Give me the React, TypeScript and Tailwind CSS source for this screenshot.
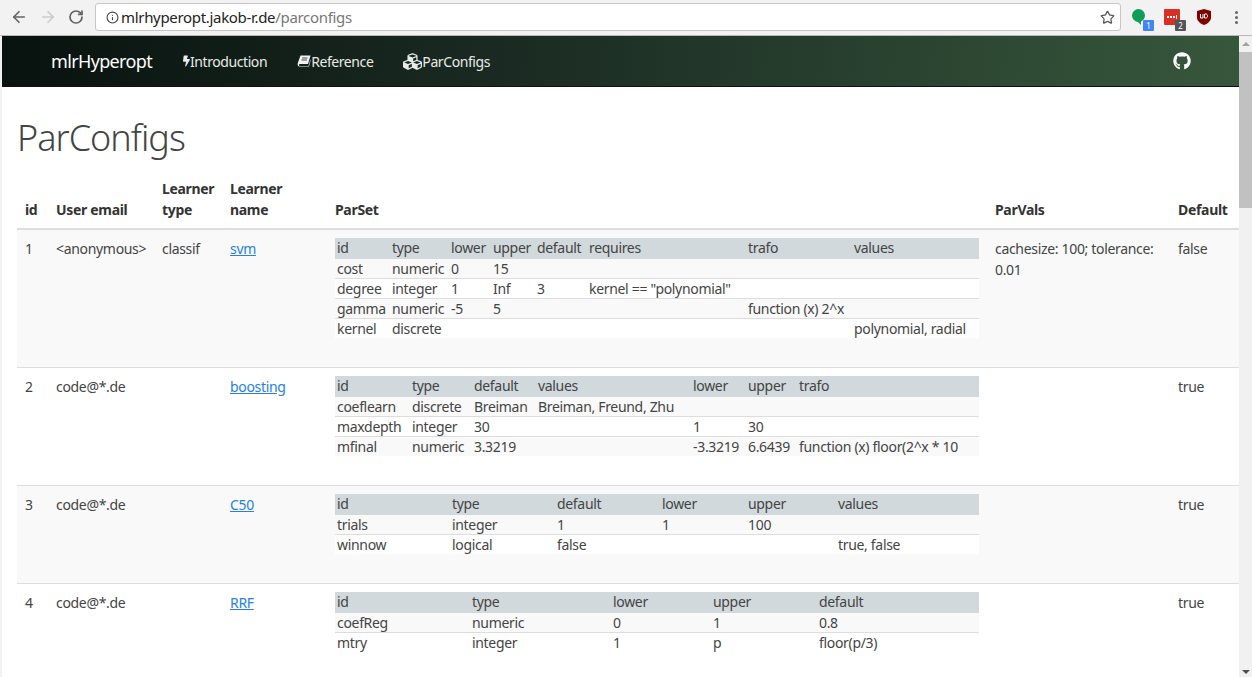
import React from "react";
import { FaBolt, FaCubes, FaGithub } from "react-icons/fa";
import { ArrowLeft, ArrowRight, RotateCw, Info, Star } from "lucide-react";

type Sub = { cols: number[]; rows: string[][] };

const subs: Sub[] = [
  {
    cols: [55, 59, 42, 44, 52, 159, 106, 127],
    rows: [
      ["id", "type", "lower", "upper", "default", "requires", "trafo", "values"],
      ["cost", "numeric", "0", "15", "", "", "", ""],
      ["degree", "integer", "1", "Inf", "3", 'kernel == "polynomial"', "", ""],
      ["gamma", "numeric", "-5", "5", "", "", "function (x) 2^x", ""],
      ["kernel", "discrete", "", "", "", "", "", "polynomial, radial"],
    ],
  },
  {
    cols: [75, 62, 64, 155, 55, 51, 182],
    rows: [
      ["id", "type", "default", "values", "lower", "upper", "trafo"],
      ["coeflearn", "discrete", "Breiman", "Breiman, Freund, Zhu", "", "", ""],
      ["maxdepth", "integer", "30", "", "1", "30", ""],
      ["mfinal", "numeric", "3.3219", "", "-3.3219", "6.6439", "function (x) floor(2^x * 10"],
    ],
  },
  {
    cols: [115, 105, 105, 86, 90, 143],
    rows: [
      ["id", "type", "default", "lower", "upper", "values"],
      ["trials", "integer", "1", "1", "100", ""],
      ["winnow", "logical", "false", "", "", "true, false"],
    ],
  },
  {
    cols: [135, 141, 100, 106, 162],
    rows: [
      ["id", "type", "lower", "upper", "default"],
      ["coefReg", "numeric", "0", "1", "0.8"],
      ["mtry", "integer", "1", "p", "floor(p/3)"],
    ],
  },
];

const mainRows = [
  { id: "1", email: "<anonymous>", type: "classif", name: "svm", sub: 0, vals: "cachesize: 100; tolerance: 0.01", def: "false" },
  { id: "2", email: "code@*.de", type: "", name: "boosting", sub: 1, vals: "", def: "true" },
  { id: "3", email: "code@*.de", type: "", name: "C50", sub: 2, vals: "", def: "true" },
  { id: "4", email: "code@*.de", type: "", name: "RRF", sub: 3, vals: "", def: "true" },
];

function SubTable({ sub }: { sub: Sub }) {
  return (
    <table className="w-[644px] table-fixed border-separate border-spacing-0 text-[14px]">
      <colgroup>
        {sub.cols.map((w, i) => (
          <col key={i} style={{ width: w }} />
        ))}
      </colgroup>
      <tbody>
        {sub.rows.map((r, i) => (
          <tr key={i} className={i === 0 ? "bg-[#d1d9dc]" : i % 2 === 1 ? "bg-[#f9f9f9]" : "bg-white"}>
            {r.map((c, j) => (
              <td
                key={j}
                className={`whitespace-nowrap px-[2px] ${i === 0 ? "pt-0 pb-[1px] leading-[20px]" : "py-0 leading-[19px]"} ${
                  i > 1 ? "border-t border-[#dddddd]" : ""
                }`}
              >
                {c}
              </td>
            ))}
          </tr>
        ))}
      </tbody>
    </table>
  );
}

function Toolbar() {
  return (
    <div className="flex h-[36px] shrink-0 items-start border-b border-[#b9b9b9] bg-[#f2f2f2]">
      <div className="flex w-[95px] items-center pt-[8px] pl-[10px]">
        <ArrowLeft size={18} strokeWidth={2.2} className="text-[#5f6368]" />
        <ArrowRight size={18} strokeWidth={2.2} className="ml-[11px] text-[#c9cbce]" />
        <RotateCw size={16} strokeWidth={2.6} className="ml-[11px] text-[#5f6368]" />
      </div>
      <div className="mt-[3px] flex h-[28px] w-[1026px] items-center rounded-[3px] border border-[#c6c6c6] bg-white pr-[4px] pl-[10px] text-[15px] tracking-[-0.32px]">
        <Info size={13} strokeWidth={2} className="mr-[2px] text-[#444]" />
        <span className="text-[#222]">mlrhyperopt.jakob-r.de</span>
        <span className="text-[#777]">/parconfigs</span>
        <Star size={15} strokeWidth={2} className="mr-[1px] ml-auto text-[#555]" />
      </div>
      <div className="relative flex-1">
        <div className="absolute top-[9px] left-[11px] h-[13px] w-[13px] rounded-full bg-[#0f9d58]" />
        <div className="absolute top-[20px] left-[15px] h-0 w-0 border-t-[5px] border-l-[5px] border-t-[#0f9d58] border-l-transparent" />
        <div className="absolute top-[20px] left-[22px] flex h-[11px] w-[11px] items-center justify-center rounded-[1px] bg-[#4285f4] text-[8px] leading-none text-white">1</div>
        <div className="absolute top-[9px] left-[43px] flex h-[16px] w-[16px] items-center justify-center gap-[1px] rounded-[1px] bg-[#d93025]">
          <span className="h-[2px] w-[2px] bg-white" />
          <span className="h-[2px] w-[2px] bg-white" />
          <span className="h-[2px] w-[2px] bg-white" />
          <span className="h-[4px] w-[1px] bg-white" />
        </div>
        <div className="absolute top-[20px] left-[54px] flex h-[11px] w-[11px] items-center justify-center rounded-[1px] bg-[#555] text-[8px] leading-none text-white">2</div>
        <svg viewBox="0 0 14 16" className="absolute top-[9px] left-[76px] h-[16px] w-[14px]">
          <path d="M7 0 L14 2 V9 C14 12 10 15 7 16 C4 15 0 12 0 9 V2 Z" fill="#800000" />
          <path d="M3.5 5 V9 H6 V5 M7.5 5 V9 H9 C11 9 11 5 9 5 H7.5" fill="none" stroke="#fff" strokeWidth="1" />
        </svg>
        <div className="absolute top-[11px] left-[114px] flex flex-col gap-[2px]">
          <span className="h-[3px] w-[3px] rounded-full bg-[#666]" />
          <span className="h-[3px] w-[3px] rounded-full bg-[#666]" />
          <span className="h-[3px] w-[3px] rounded-full bg-[#666]" />
        </div>
      </div>
    </div>
  );
}

function BookIcon() {
  return (
    <svg viewBox="0 0 14 12" className="h-[12px] w-[14px]" fill="none">
      <path d="M3.5 0.5 H13.5 L11 9 H3 C1.6 9 1.6 11 3 11 H11.5 L13.5 4 V6 L12 11.5 H2.5 C0.8 11.5 0.3 9.5 0.8 8 Z" fill="#f2f2f2" />
      <path d="M5 3 H10.5 M4.5 5 H10" stroke="#1a2a22" strokeWidth="0.8" />
    </svg>
  );
}

function Navbar() {
  return (
    <nav className="flex h-[51px] shrink-0 items-center border-b border-[#111] bg-[linear-gradient(95deg,#08120e_0%,#1a2a22_40%,#37573c_100%)] pr-[49px] pl-[49px] text-white">
      <span className="w-[101px] text-[18px] tracking-[-0.65px]">mlrHyperopt</span>
      <div className="ml-[31px] flex items-center gap-[30px] text-[14px] tracking-[-0.42px] text-[#e8ece9]">
        <span className="flex items-center"><FaBolt size={12} className="w-[7px]" />Introduction</span>
        <span className="flex items-center"><BookIcon />Reference</span>
        <span className="flex items-center"><FaCubes size={19} />ParConfigs</span>
      </div>
      <FaGithub size={18} className="ml-auto mr-[-1px] text-white" />
    </nav>
  );
}

export default function App() {
  return (
    <div className="flex h-[677px] w-[1252px] flex-col overflow-hidden bg-white font-['Noto_Sans',sans-serif] text-[14px] leading-[21px] tracking-[-0.32px] text-[#444]">
      <Toolbar />
      <div className="flex min-h-0 flex-1">
        <div className="w-[2px] shrink-0 bg-[#f2f2f2]" />
        <div className="flex min-w-0 w-[1237px] flex-col overflow-hidden">
          <Navbar />
          <main className="pl-[15px]">
            <h1 className="mt-[29px] mb-[19px] text-[36px] leading-[43px] font-light tracking-[-1px] text-[#444]">ParConfigs</h1>
            <table className="w-[1222px] table-fixed border-separate border-spacing-0">
              <colgroup>
                <col className="w-[31px]" />
                <col className="w-[106px]" />
                <col className="w-[68px]" />
                <col className="w-[105px]" />
                <col className="w-[660px]" />
                <col className="w-[183px]" />
                <col className="w-[69px]" />
              </colgroup>
              <thead>
                <tr className="text-[#333]">
                  {["id", "User email", "Learner type", "Learner name", "ParSet", "ParVals", "Default"].map((h) => (
                    <th key={h} className="border-b-2 border-[#dddddd] px-[8px] pb-[8px] text-left align-bottom font-bold">{h}</th>
                  ))}
                </tr>
              </thead>
              <tbody>
                {mainRows.map((r, i) => (
                  <tr key={r.id} className={i % 2 === 0 ? "bg-[#f9f9f9]" : "bg-white"}>
                    <td className="border-b border-[#dddddd] px-[8px] pt-[8px] align-top">{r.id}</td>
                    <td className="border-b border-[#dddddd] px-[8px] pt-[8px] align-top">{r.email}</td>
                    <td className="border-b border-[#dddddd] px-[8px] pt-[8px] align-top">{r.type}</td>
                    <td className="border-b border-[#dddddd] px-[8px] pt-[8px] align-top">
                      <a className="text-[#2780e3] underline">{r.name}</a>
                    </td>
                    <td className="border-b border-[#dddddd] px-[8px] pt-[8px] pb-[29px] align-top"><SubTable sub={subs[r.sub]} /></td>
                    <td className="border-b border-[#dddddd] px-[8px] pt-[8px] align-top">{r.vals}</td>
                    <td className="border-b border-[#dddddd] px-[8px] pt-[8px] align-top">{r.def}</td>
                  </tr>
                ))}
              </tbody>
            </table>
          </main>
        </div>
        <div className="flex w-[13px] shrink-0 flex-col items-center bg-[#f1f1f1]">
          <div className="mt-[6px] h-0 w-0 border-x-[4px] border-b-[4px] border-x-transparent border-b-[#a3a3a3]" />
          <div className="mt-[6px] h-[156px] w-full bg-[#c1c1c1]" />
          <div className="mt-auto mb-[3px] h-0 w-0 border-x-[4px] border-t-[4px] border-x-transparent border-t-[#505050]" />
        </div>
      </div>
    </div>
  );
}
